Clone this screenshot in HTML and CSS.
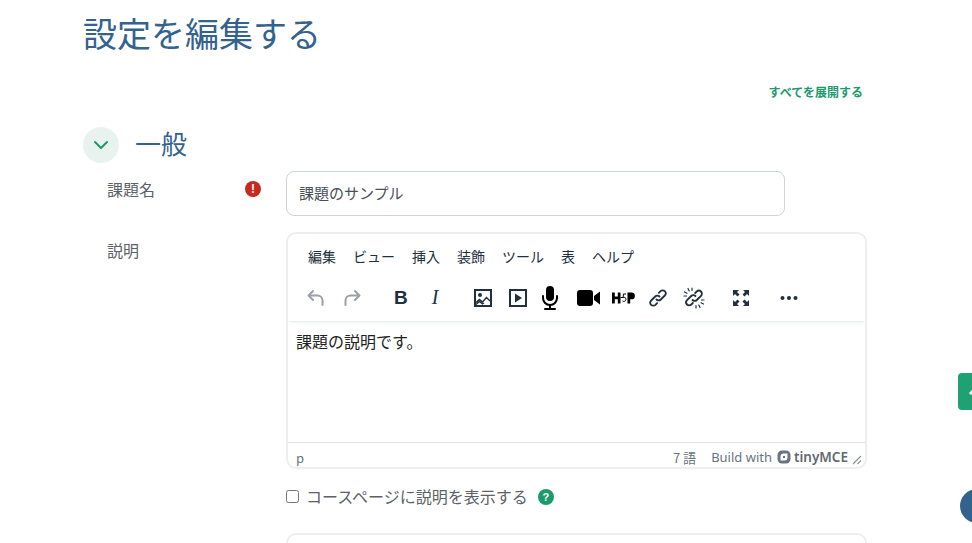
FILE: index.html
```html
<!DOCTYPE html>
<html lang="ja">
<head>
    <meta charset="UTF-8">
    <title>設定を編集する</title>
    <link rel="stylesheet" href="styles.css">
</head>
<body>
    <div class="page">
        <h1>設定を編集する</h1>
        <div class="expand-row"><a href="#">すべてを展開する</a></div>

        <div class="section-head">
            <span class="collapse-btn">
                <svg width="16" height="16" viewBox="0 0 16 16"><path d="M2 5l6 6 6-6" fill="none" stroke="#1d9a6c" stroke-width="2" stroke-linecap="round" stroke-linejoin="round"/></svg>
            </span>
            <h2>一般</h2>
        </div>

        <div class="form-row name-row">
            <div class="form-label name-label">
                <label>課題名</label>
                <span class="icon-required">!</span>
            </div>
            <input class="text-input" type="text" value="課題のサンプル">
        </div>

        <div class="form-row">
            <div class="form-label desc-label"><label>説明</label></div>
            <div class="form-field">
                <div class="editor">
                    <div class="menubar">
                        <span>編集</span><span>ビュー</span><span>挿入</span><span>装飾</span><span>ツール</span><span>表</span><span>ヘルプ</span>
                    </div>
                    <div class="toolbar">
                        <div class="tool-group undo-group">
                            <svg width="24" height="24" viewBox="0 0 24 24"><path d="M9 5L4.500 9.500 9 14M5 9.500h8.500a5 5 0 0 1 5 5V19" fill="none" stroke="#9ba1a8" stroke-width="2" stroke-linecap="round" stroke-linejoin="round"/></svg>
                            <svg width="24" height="24" viewBox="0 0 24 24"><path d="M15 5l4.500 4.500L15 14M19 9.500h-8.500a5 5 0 0 0-5 5V19" fill="none" stroke="#9ba1a8" stroke-width="2" stroke-linecap="round" stroke-linejoin="round"/></svg>
                        </div>
                        <div class="tool-group format-group">
                            <span class="tool-b">B</span>
                            <span class="tool-i">I</span>
                        </div>
                        <div class="tool-group media-group">
                            <svg class="ic-image" width="20" height="20" viewBox="0 0 20 20"><rect x="2" y="2" width="16" height="16" fill="none" stroke="#222f3e" stroke-width="2"/><circle cx="7" cy="7" r="2" fill="#222f3e"/><path d="M3 14.500l3.500-3 3 2.500 4-4.500 3.500 3.500M3 16.500l3.500-3 3 2.500 1.500-1" fill="none" stroke="#222f3e" stroke-width="1.400"/></svg>
                            <svg class="ic-media" width="20" height="20" viewBox="0 0 20 20"><rect x="2" y="2" width="16" height="16" fill="none" stroke="#222f3e" stroke-width="2"/><path d="M7 5.500l7 4.500-7 4.500z" fill="#222f3e"/></svg>
                            <svg class="ic-mic" width="18" height="26" viewBox="0 0 18 26"><rect x="5" y="1" width="8" height="15" rx="4" fill="#000"/><path d="M2 11v2a7 7 0 0 0 14 0v-2" fill="none" stroke="#000" stroke-width="2" stroke-linecap="round"/><path d="M9 20v3M4 24h10" stroke="#000" stroke-width="2" stroke-linecap="round"/></svg>
                            <svg class="ic-video" width="24" height="16" viewBox="0 0 24 16"><rect x="0" y="0" width="16" height="16" rx="3" fill="#000"/><path d="M17 6l6-4.500v13L17 10z" fill="#000"/></svg>
                            <svg class="ic-h5p" width="24" height="14" viewBox="0 0 24 14"><path d="M1 1.500h2.800v4h3v-4H9.500v11H6.800V8.200h-3v4.300H1z" fill="#000"/><path d="M9.500 6.500h2.500M15 3h-2.500L12 6.500c1.500-.5 3 0 3 1.800S13 11 11.500 10" fill="none" stroke="#000" stroke-width="1"/><path d="M16.500 1.500h4a3.300 3.300 0 0 1 0 6.800h-1.300v4.200h-2.700z" fill="#000"/></svg>
                            <svg class="ic-link" width="20" height="20" viewBox="0 0 20 20"><path d="M8.500 11.500a3 3 0 0 0 4.300 0l4-4a3 3 0 0 0-4.300-4.300l-1.600 1.600M11.500 8.500a3 3 0 0 0-4.300 0l-4 4a3 3 0 0 0 4.300 4.300l1.600-1.600" fill="none" stroke="#222f3e" stroke-width="1.800" stroke-linecap="round"/></svg>
                            <svg class="ic-unlink" width="22" height="22" viewBox="0 0 22 22"><path d="M9.500 13a3 3 0 0 0 4.300 0l4.200-4.200a3 3 0 0 0-4.300-4.300l-1.500 1.500M12.500 9a3 3 0 0 0-4.300 0l-4.200 4.200a3 3 0 0 0 4.300 4.300l1.500-1.500" fill="none" stroke="#222f3e" stroke-width="1.800" stroke-linecap="round"/><path d="M5 1.500l1.200 2.500M1.500 5l2.500 1.200M17 20.500l-1.200-2.500M20.500 17l-2.500-1.200M9 1v2.500M1 9h2.500M13 21v-2.500M21 13h-2.500" stroke="#222f3e" stroke-width="1.200" stroke-linecap="round"/></svg>
                        </div>
                        <div class="tool-group full-group">
                            <svg width="18" height="18" viewBox="0 0 18 18"><path d="M1 1h6L5 3l2.500 2.500-2 2L3 5 1 7zM17 1v6l-2-2-2.500 2.500-2-2L13 3l-2-2zM1 17v-6l2 2 2.500-2.500 2 2L5 15l2 2zM17 17h-6l2-2-2.500-2.500 2-2L15 13l2-2z" fill="#222f3e"/></svg>
                        </div>
                        <div class="tool-group more-group">
                            <svg width="18" height="6" viewBox="0 0 18 6"><circle cx="2.500" cy="3" r="2" fill="#222f3e"/><circle cx="9" cy="3" r="2" fill="#222f3e"/><circle cx="15.500" cy="3" r="2" fill="#222f3e"/></svg>
                        </div>
                    </div>
                    <div class="editor-body">課題の説明です。</div>
                    <div class="statusbar">
                        <span class="path">p</span>
                        <span class="words">7 語</span>
                        <span class="build">Build with</span>
                        <span class="tiny-logo">
                            <svg width="14" height="14" viewBox="0 0 14 14"><rect x="0.500" y="0.500" width="13" height="13" rx="4.500" fill="#6a7480"/><path d="M3.500 10.500V6.500a3 3 0 0 1 3-3h4v4a3 3 0 0 1-3 3z" fill="#fff"/><rect x="6" y="6" width="2" height="2" fill="#6a7480"/></svg>
                            tinyMCE
                        </span>
                        <svg class="resize" width="10" height="10" viewBox="0 0 10 10"><path d="M1 9l8-8M5.500 9L9 5.500" stroke="#8a9199" stroke-width="1.100"/></svg>
                    </div>
                </div>
                <div class="check-row">
                    <input type="checkbox">
                    <span>コースページに説明を表示する</span>
                    <span class="icon-help">?</span>
                </div>
                <div class="next-box"></div>
            </div>
        </div>
    </div>

    <div class="side-tab"><svg width="14" height="10" viewBox="0 0 14 10"><path d="M2 8l5-5 5 5" fill="none" stroke="#fff" stroke-width="3"/></svg></div>
    <div class="round-btn"></div>
</body>
</html>
```

FILE: styles.css
```css
* {
    box-sizing: border-box;
}

html, body {
    height: 543px;
    overflow: hidden;
}

body {
    margin: 0;
    background: #fff;
    font-family: "Noto Sans CJK JP", "Noto Sans", sans-serif;
    color: #1d2125;
}

.page {
    width: 784px;
    margin-left: 83px;
    padding-top: 9px;
}

h1 {
    margin: 0;
    font-size: 34px;
    line-height: 48px;
    font-weight: 400;
    color: #34628f;
}

.expand-row {
    margin-top: 26px;
    text-align: right;
    padding-right: 4px;
    font-size: 12px;
    line-height: 18px;
    font-weight: 700;
}

.expand-row a {
    color: #1d9a6c;
    text-decoration: none;
}

.section-head {
    display: flex;
    align-items: center;
    gap: 16px;
    margin-top: 24px;
}

.collapse-btn {
    width: 36px;
    height: 36px;
    border-radius: 50%;
    background: #e8f3ef;
    display: flex;
    align-items: center;
    justify-content: center;
}

h2 {
    margin: 0 0 4px;
    font-size: 26px;
    line-height: 36px;
    font-weight: 400;
    color: #34628f;
}

.form-row {
    display: flex;
}

.name-row {
    margin-top: 6px;
}

.form-label {
    width: 203px;
    padding-left: 24px;
    padding-right: 25px;
    display: flex;
    justify-content: space-between;
    align-items: flex-start;
    font-size: 16px;
    line-height: 24px;
    color: #5b6268;
    flex-shrink: 0;
}

.name-label {
    padding-top: 6px;
}

.desc-label {
    padding-top: 6px;
}

.icon-required {
    width: 16px;
    height: 16px;
    margin-top: 4px;
    border-radius: 50%;
    background: #c9281f;
    color: #fff;
    font-size: 12px;
    font-weight: 700;
    line-height: 16px;
    text-align: center;
    font-family: "Liberation Sans", sans-serif;
}

.text-input {
    width: 499px;
    height: 45px;
    border: 1px solid #ced4da;
    border-radius: 8px;
    padding: 0 12px 2px;
    font-family: inherit;
    font-size: 15px;
    color: #495057;
}

.form-row + .form-row {
    margin-top: 16px;
}

.form-field {
    width: 581px;
}

.editor {
    height: 237px;
    border: 2px solid #eeeeee;
    border-radius: 10px;
    display: flex;
    flex-direction: column;
    overflow: hidden;
}

.menubar {
    display: flex;
    gap: 17px;
    padding: 12px 0 0 20px;
    height: 42px;
    font-size: 14px;
    line-height: 20px;
    color: #222f3e;
}

.toolbar {
    display: flex;
    align-items: center;
    height: 45px;
    padding: 0 0 2px 16px;
    box-shadow: 0 2px 3px -1px rgba(34, 47, 62, 0.12);
    position: relative;
}

.tool-group {
    display: flex;
    align-items: center;
}

.undo-group {
    gap: 12px;
    width: 86px;
}

.format-group {
    width: 83px;
    padding-left: 4px;
    gap: 24px;
    font-family: "Liberation Sans", sans-serif;
    color: #222f3e;
}

.tool-b {
    font-size: 19px;
    font-weight: 700;
}

.tool-i {
    font-family: "Liberation Serif", serif;
    font-style: italic;
    font-size: 20px;
}

.media-group {
    width: 259px;
}

.ic-media {
    margin-left: 15px;
}

.ic-mic {
    margin-left: 13px;
}

.ic-video {
    margin-left: 18px;
}

.ic-h5p {
    margin-left: 10px;
}

.ic-link {
    margin-left: 13px;
}

.ic-unlink {
    margin-left: 15px;
}

.full-group {
    width: 48px;
}

.editor-body {
    flex: 1;
    padding: 8px 8px 0 8px;
    font-size: 16px;
    line-height: 24px;
    color: #222;
}

.statusbar {
    height: 25px;
    border-top: 1px solid #e3e3e3;
    display: flex;
    align-items: center;
    padding: 4px 3px 0 8px;
    font-size: 13px;
    color: #6a7480;
}

.path {
    margin-right: auto;
}

.words {
    margin-right: 15px;
}

.build {
    margin-right: 5px;
    font-family: "Noto Sans", sans-serif;
}

.tiny-logo {
    display: flex;
    align-items: center;
    gap: 3px;
    font-family: "Noto Sans", sans-serif;
    font-size: 13.500px;
    font-weight: 600;
    color: #5f6972;
}

.resize {
    margin-left: 4px;
    align-self: flex-end;
    margin-bottom: 2px;
}

.check-row {
    display: flex;
    align-items: center;
    height: 22px;
    margin-top: 16px;
    font-size: 16px;
    color: #5b6268;
}

.check-row input {
    width: 13px;
    height: 13px;
    margin: 0 7px 0 0;
}

.icon-help {
    width: 16px;
    height: 16px;
    margin-left: 10px;
    margin-top: 2px;
    border-radius: 50%;
    background: #1d9a6c;
    color: #fff;
    font-size: 11px;
    font-weight: 700;
    line-height: 16px;
    text-align: center;
    font-family: "Liberation Sans", sans-serif;
}

.next-box {
    height: 40px;
    margin-top: 26px;
    border: 2px solid #eeeeee;
    border-radius: 10px;
}

.side-tab {
    position: fixed;
    left: 958px;
    top: 373px;
    width: 30px;
    height: 37px;
    border-radius: 4px;
    background: #1fa273;
    padding: 13px 0 0 10px;
}

.side-tab svg {
    display: block;
}

.round-btn {
    position: fixed;
    left: 960px;
    top: 489px;
    width: 34px;
    height: 34px;
    border-radius: 50%;
    background: #34628f;
}
```
